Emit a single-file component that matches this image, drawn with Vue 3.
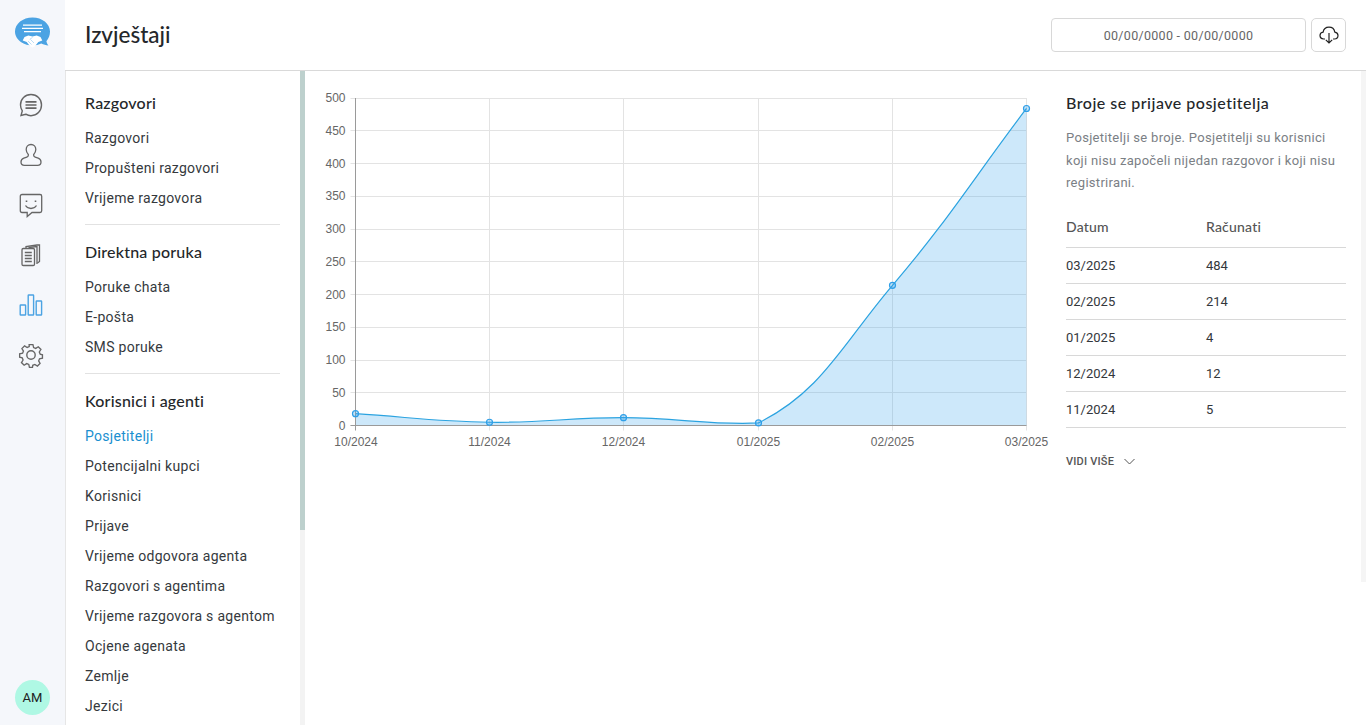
<script setup>
const groups = [
  { title: 'Razgovori', items: ['Razgovori', 'Propušteni razgovori', 'Vrijeme razgovora'] },
  { title: 'Direktna poruka', items: ['Poruke chata', 'E-pošta', 'SMS poruke'] },
  { title: 'Korisnici i agenti', items: ['Posjetitelji', 'Potencijalni kupci', 'Korisnici', 'Prijave', 'Vrijeme odgovora agenta', 'Razgovori s agentima', 'Vrijeme razgovora s agentom', 'Ocjene agenata', 'Zemlje', 'Jezici'] }
]
const rows = [['03/2025', 484], ['02/2025', 214], ['01/2025', 4], ['12/2024', 12], ['11/2024', 5]]

const left = 355.5, right = 1026.5, top = 98, bottom = 425.5
const values = [18, 5, 12, 4, 214, 484]
const labels = ['10/2024', '11/2024', '12/2024', '01/2025', '02/2025', '03/2025']
const xs = labels.map((_, i) => Math.floor(left + (i * (right - left)) / 5) + 0.5)
const y = v => bottom - (v / 500) * (bottom - top)
const snap = v => Math.floor(v) + 0.5
const ticks = [0, 50, 100, 150, 200, 250, 300, 350, 400, 450, 500]
const pts = values.map((v, i) => [xs[i], y(v)])

function spline(p, t) {
  const clampY = v => Math.min(bottom, Math.max(top, v))
  const ctrl = p.map((c, i) => {
    const a = p[i - 1] || c, b = p[i + 1] || c
    const d01 = Math.hypot(c[0] - a[0], c[1] - a[1])
    const d12 = Math.hypot(b[0] - c[0], b[1] - c[1])
    const sum = d01 + d12 || 1
    const fa = (t * d01) / sum, fb = (t * d12) / sum
    return {
      prev: [c[0] - fa * (b[0] - a[0]), clampY(c[1] - fa * (b[1] - a[1]))],
      next: [c[0] + fb * (b[0] - a[0]), clampY(c[1] + fb * (b[1] - a[1]))]
    }
  })
  let s = `M${p[0][0]} ${p[0][1]}`
  for (let i = 1; i < p.length; i++) {
    const n = ctrl[i - 1].next, m = ctrl[i].prev
    s += `C${n[0]} ${n[1]} ${m[0]} ${m[1]} ${p[i][0]} ${p[i][1]}`
  }
  return s
}
const line = spline(pts, 0.4)
const area = `${line}L${right} ${bottom}L${left} ${bottom}Z`
</script>

<template>
  <div class="app">
    <aside class="rail">
      <svg class="logo" width="36" height="32" viewBox="0 0 36 32">
        <path d="M17.500 .5C7.800 .5 0 6.800 0 14.500c0 4.500 2.600 8.400 6.700 11 3 1.900 6.700 3 10.800 3 3.200 0 6.200-.7 8.800-1.900 2.200 1 4.700 1.700 7.200 1.900-.9-1.100-1.700-2.500-2.100-4.300C33.700 21.500 35 18.200 35 14.500 35 6.800 27.200 .5 17.500 .5Z" fill="#4ba3e3"/>
        <path d="M8 8.200h19M7 11.400h21M9 14.600h17" stroke="#fff" stroke-width="1.300" fill="none"/>
        <path d="M9.500 20l3.800-1.600 4.200 1.100 4.200-1.100L25.500 20l1.800 3.500-4 1.500-3.300 4.200-2.500 1.300-2.500-1.300-3.300-4.200-4-1.500Z" fill="#fff"/>
        <path d="M13 24l3.500 3.500M15.500 22.500l3.500 3.500M17.500 20.500l-2.800 1.800" stroke="#a9d4f2" stroke-width=".8" fill="none"/>
      </svg>
      <div class="rail-icons">
        <svg width="26" height="26" viewBox="0 0 26 26" fill="none" stroke="#666" stroke-width="1.400">
          <path d="M13 2.500C7 2.500 2.500 7 2.500 13c0 2.200.7 4.200 1.800 5.900l-1.300 4.600 4.800-1.300c1.600 1 3.300 1.500 5.200 1.500 6 0 10.500-4.700 10.500-10.700S19 2.500 13 2.500Z"/>
          <path d="M7.500 9.800h11M7.500 13h11M7.500 16.200h11" stroke-width="1.700"/>
        </svg>
        <svg width="26" height="26" viewBox="0 0 26 26" fill="none" stroke="#666" stroke-width="1.300">
          <path d="M13 2.500c-2.900 0-4.800 2.200-4.800 5.100 0 2 .9 3.700 2.100 4.800v1.100c0 .9-.6 1.300-1.500 1.600l-3 1C3.900 16.800 3 18 3 19.900c0 2.200 1.500 3.400 3.500 3.400h13c2 0 3.500-1.200 3.500-3.400 0-1.900-.9-3.100-2.800-3.800l-3-1c-.9-.3-1.500-.7-1.500-1.600v-1.100c1.200-1.100 2.100-2.800 2.100-4.800 0-2.900-1.900-5.100-4.800-5.100Z"/>
        </svg>
        <svg width="26" height="26" viewBox="0 0 26 26" fill="none" stroke="#666" stroke-width="1.300">
          <path d="M4 2.500h18c1 0 1.700.7 1.700 1.700v14.600c0 1-.7 1.700-1.700 1.700h-8l-4.800 4v-4H4c-1 0-1.700-.7-1.700-1.700V4.200c0-1 .7-1.700 1.700-1.700Z"/>
          <path d="M8.500 8.500v1.500M17.500 8.500v1.500" stroke-width="1.600"/>
          <path d="M7.500 13.500c1.500 2.200 3.400 3 5.500 3s4-.8 5.500-3"/>
        </svg>
        <svg width="26" height="26" viewBox="0 0 26 26" fill="none" stroke="#666" stroke-width="1.300">
          <path d="M8 6V4.500l11-1.500h2.500v16.500l-2 1.500"/>
          <path d="M10.500 5.500l8.500-1v17.500"/>
          <rect x="4" y="6.500" width="12.500" height="17" rx="1.300"/>
          <path d="M6.800 10.500h7M6.800 13.500h7M6.800 16.500h7M6.800 19.500h7"/>
        </svg>
        <svg width="26" height="26" viewBox="0 0 26 26" fill="none" stroke="#4ba3e3" stroke-width="1.400">
          <rect x="2.200" y="13" width="5.400" height="10" rx=".5"/>
          <rect x="10.200" y="3" width="5.400" height="20" rx=".5"/>
          <rect x="18.200" y="9" width="5.400" height="14" rx=".5"/>
        </svg>
        <svg width="26" height="26" viewBox="0 0 26 26" fill="none" stroke="#666" stroke-width="1.400">
          <circle cx="13" cy="13" r="4.200"/>
          <path d="M11 2h4l.7 3.100 2.200.9 2.700-1.700 2.800 2.800-1.700 2.700.9 2.200L25 12.700v3.600l-3.100.7-.9 2.200 1.500 2.600-2.800 2.800-2.700-1.700-2.200.9L14.500 26h-3.200l-.7-3.100-2.200-.9-2.700 1.700-2.800-2.800 1.700-2.700-.9-2.200L1 15.300v-3.600l3.100-.7.900-2.200-1.600-2.700 2.800-2.800 2.700 1.700 2.200-.9Z" transform="translate(.7 .7) scale(.95)"/>
        </svg>
      </div>
      <div class="avatar">AM</div>
    </aside>

    <div class="main">
      <header class="head">
        <h1>Izvještaji</h1>
        <div class="tools">
          <div class="range">00/00/0000 - 00/00/0000</div>
          <button class="cloud" type="button" aria-label="Preuzmi">
            <svg width="20" height="18" viewBox="0 0 20 18" fill="none" stroke="#222" stroke-width="1.200">
              <path d="M6 13H4.600C2.500 13 1 11.500 1 9.600 1 7.800 2.300 6.400 4.100 6.200 4.600 3.300 7 1.200 10 1.200c2.900 0 5.300 2.100 5.800 4.900 1.800.3 3.200 1.700 3.200 3.500C19 11.500 17.500 13 15.500 13H14"/>
              <path d="M10 7v10M6.800 13.800l3.200 3.200 3.200-3.200"/>
            </svg>
          </button>
        </div>
      </header>

      <div class="body">
        <nav class="nav">
          <section v-for="g in groups" :key="g.title" class="group">
            <h2>{{ g.title }}</h2>
            <a v-for="item in g.items" :key="item" :class="{ active: item === 'Posjetitelji' }">{{ item }}</a>
          </section>
        </nav>
        <div class="track"><div class="thumb"></div></div>

        <div class="content">
          <div class="chart">
            <svg width="761" height="400" viewBox="305 71 761 400" class="chart-svg">
              <g stroke="#e3e3e3" stroke-width="1">
                <line v-for="t in ticks" :key="t" :x1="left - 5" :x2="right" :y1="snap(y(t))" :y2="snap(y(t))" />
                <line v-for="x in xs.slice(1)" :key="x" :x1="x" :x2="x" :y1="top" :y2="bottom + 5" />
              </g>
              <path :d="area" fill="rgba(54,162,235,.25)" />
              <path :d="line" fill="none" stroke="#2ba3e0" stroke-width="1.200" />
              <line :x1="left" :x2="left" :y1="top" :y2="bottom + 5" stroke="#9a9a9a" />
              <line :x1="left - 5" :x2="right" :y1="bottom" :y2="bottom" stroke="#9a9a9a" />
              <circle v-for="(p, i) in pts" :key="i" :cx="p[0]" :cy="p[1]" r="3" fill="rgba(54,162,235,.3)" stroke="#2f9fe8" stroke-width="1.200" />
              <text v-for="t in ticks" :key="'t' + t" :x="left - 10" :y="y(t) + 4" text-anchor="end" class="tick">{{ t }}</text>
              <text v-for="(l, i) in labels" :key="l" :x="i === 0 ? xs[i] + 0.5 : xs[i]" y="446" text-anchor="middle" class="tick">{{ l }}</text>
            </svg>
          </div>

          <div class="side">
            <h3>Broje se prijave posjetitelja</h3>
            <p>Posjetitelji se broje. Posjetitelji su korisnici koji nisu započeli nijedan razgovor i koji nisu registrirani.</p>
            <table>
              <thead><tr><th>Datum</th><th>Računati</th></tr></thead>
              <tbody>
                <tr v-for="r in rows" :key="r[0]"><td>{{ r[0] }}</td><td>{{ r[1] }}</td></tr>
              </tbody>
            </table>
            <div class="more">VIDI VIŠE
              <svg width="11" height="7" viewBox="0 0 11 7" fill="none" stroke="#555" stroke-width="1"><path d="M.5 1l5 5 5-5"/></svg>
            </div>
          </div>

          <div class="page-track"></div>
        </div>
      </div>
    </div>
  </div>
</template>

<style>
html, body { margin: 0; overflow: hidden; background: #fff; }
</style>

<style scoped>
.app { display: flex; width: 1366px; height: 725px; overflow: hidden; font-family: Roboto, sans-serif; color: #24272a; }
.rail { flex: none; width: 65px; box-sizing: border-box; display: flex; flex-direction: column; align-items: center; padding: 17px 0 10px; background: #f5f7fb; }
.rail-icons { display: flex; flex-direction: column; align-items: center; gap: 24px; margin: 43px 3px 0 0; flex: 1; }
.avatar { width: 35px; height: 35px; border-radius: 50%; background: #aff8e4; display: flex; align-items: center; justify-content: center; font-size: 13px; color: #222; }
.main { flex: 1; min-width: 0; display: flex; flex-direction: column; }
.head { flex: none; height: 71px; box-sizing: border-box; display: flex; align-items: center; justify-content: space-between; padding: 0 20px; border-bottom: 1px solid #d9d9d9; background: #fff; }
h1 { margin: -2px 0 0; font: 500 22.500px Lato, sans-serif; color: #24272a; }
.tools { display: flex; gap: 5px; }
.range { width: 253px; height: 32px; border: 1px solid #d8d8d8; border-radius: 4px; display: flex; align-items: center; justify-content: center; font-size: 12.500px; letter-spacing: .3px; color: #666; }
.cloud { width: 35px; height: 34px; padding: 0; border: 1px solid #d8d8d8; border-radius: 5px; background: #fff; display: flex; align-items: center; justify-content: center; }
.body { flex: 1; min-height: 0; display: flex; }
.nav { flex: none; width: 235px; box-sizing: border-box; padding: 21px 20px 0 19px; border-left: 1px solid #e6e6e6; overflow: hidden; }
.group { border-bottom: 1px solid #e2e2e2; padding-bottom: 11px; margin-bottom: 16px; }
.group:last-child { border-bottom: none; }
h2 { margin: 0 0 9px; height: 22px; font: 500 16px/22px Lato, sans-serif; letter-spacing: .2px; color: #24272a; }
.nav a { display: block; height: 30px; line-height: 30px; font-size: 14px; letter-spacing: .3px; color: #35393d; }
.nav a.active { color: #1a8fd0; }
.track { flex: none; width: 5px; background: #f3f3f3; }
.thumb { width: 5px; height: 459px; background: #bdd0cd; }
.content { flex: 1; min-width: 0; display: flex; }
.chart { flex: none; width: 761px; }
.chart-svg { display: block; }
.tick { font: 12px "Liberation Sans", sans-serif; fill: #666; }
.side { flex: none; width: 280px; padding-top: 21px; }
h3 { margin: 0; font: 500 16px/22px Lato, sans-serif; letter-spacing: .5px; color: #24272a; }
p { margin: 13px 0 0; font-size: 13px; line-height: 22.500px; letter-spacing: .3px; color: #7b8085; }
table { width: 100%; border-collapse: collapse; margin-top: 11px; table-layout: fixed; }
th { height: 41px; text-align: left; font: 500 14px Lato, sans-serif; letter-spacing: .2px; color: #555; border-bottom: 1px solid #d8d8d8; padding: 0; }
th:first-child, td:first-child { width: 140px; }
td { height: 35px; font-size: 13px; color: #33373b; border-bottom: 1px solid #d8d8d8; padding: 0; }
.more { display: flex; align-items: center; gap: 10px; margin-top: 27px; font-size: 11px; font-weight: 500; letter-spacing: .2px; color: #555; }
.page-track { flex: none; width: 5px; height: 511px; margin-left: 15px; background: #f5f5f5; }
</style>
